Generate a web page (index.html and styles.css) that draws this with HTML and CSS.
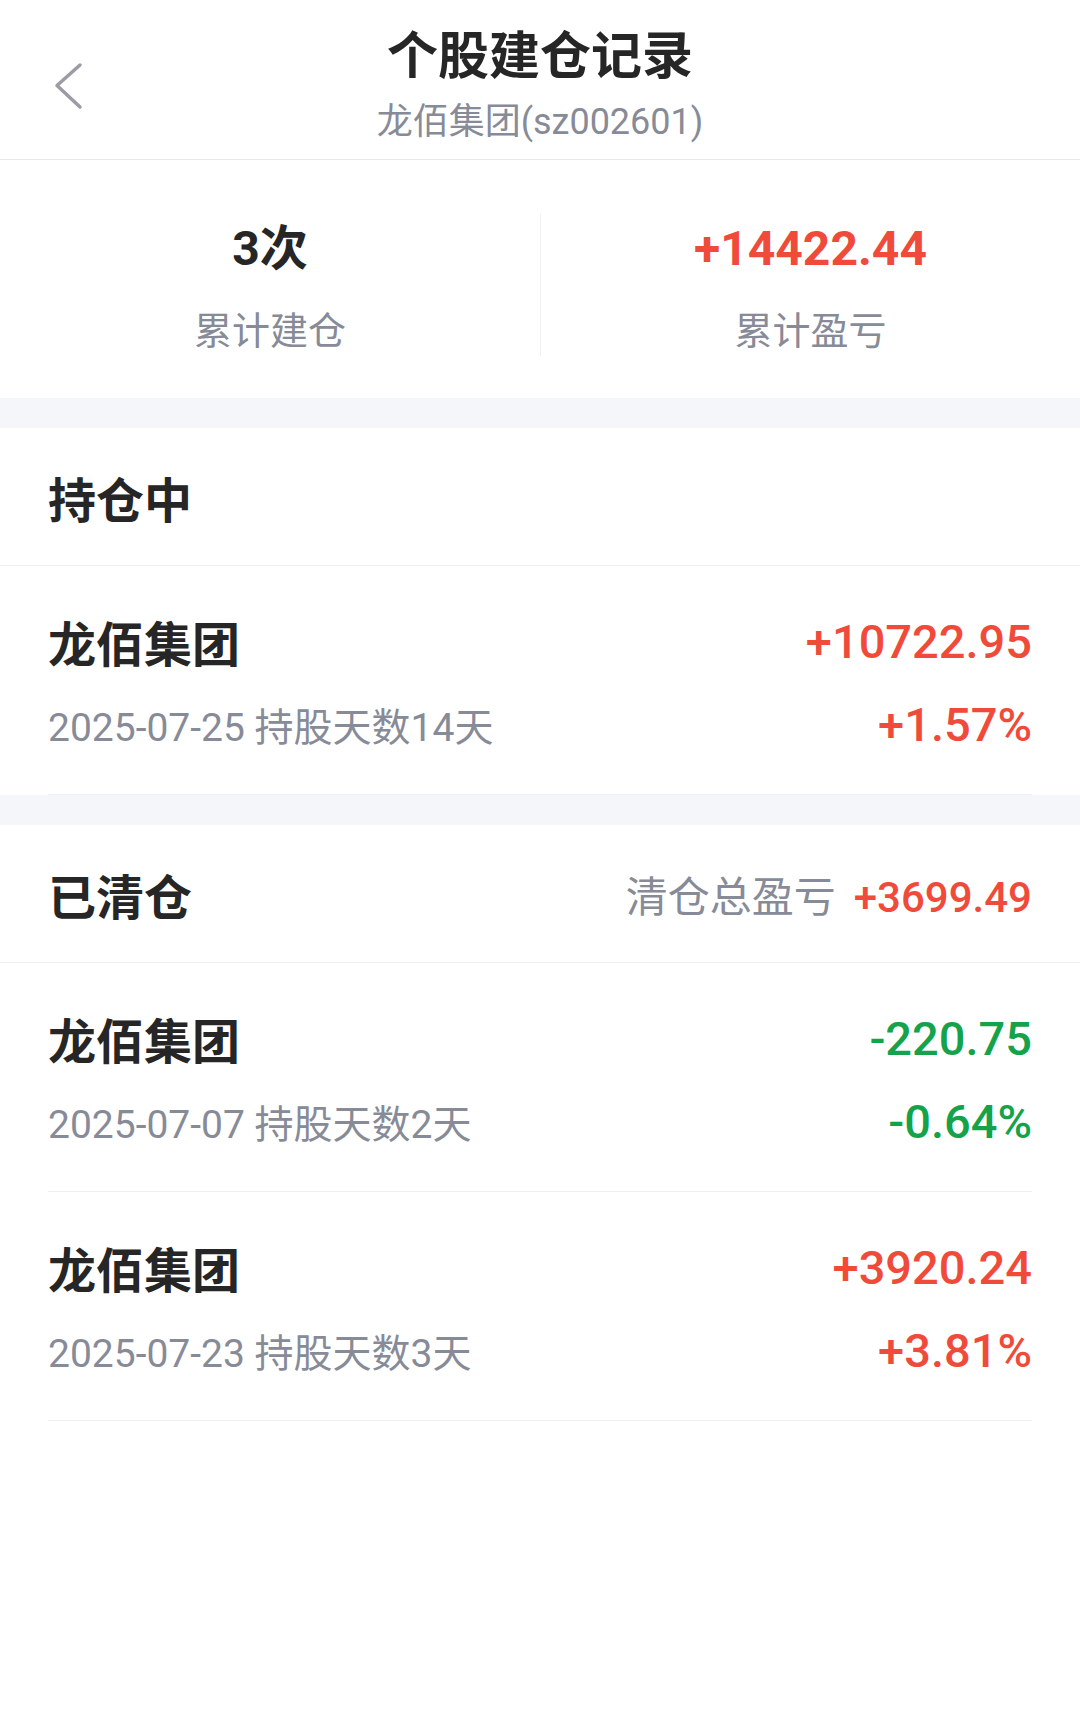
FILE: index.html
```html
<!DOCTYPE html>
<html lang="zh-CN">
<head>
    <meta charset="UTF-8">
    <meta name="viewport" content="width=device-width, initial-scale=1.0">
    <title>个股建仓记录</title>
    <link rel="stylesheet" href="styles.css">
</head>
<body>

    <header class="topbar">
        <a class="back" href="#">
            <svg width="36" height="48" viewBox="0 0 36 48">
                <path d="M30 3 L7 23.5 L30 45" fill="none" stroke="#9b9ca6" stroke-width="3.5" stroke-linecap="round" stroke-linejoin="round"/>
            </svg>
        </a>
        <div class="title-wrap">
            <h1 class="title">个股建仓记录</h1>
            <div class="subtitle">龙佰集团(sz002601)</div>
        </div>
        <div></div>
    </header>

    <section class="stats">
        <div class="stat">
            <div class="stat-value">3次</div>
            <div class="stat-label">累计建仓</div>
        </div>
        <div class="stat">
            <div class="stat-value up">+14422.44</div>
            <div class="stat-label">累计盈亏</div>
        </div>
    </section>

    <section class="group">
        <div class="group-head">
            <span class="group-title">持仓中</span>
        </div>
        <div class="record">
            <div class="row">
                <span class="name">龙佰集团</span>
                <span class="amount up">+10722.95</span>
            </div>
            <div class="row">
                <span class="meta">2025-07-25 持股天数14天</span>
                <span class="amount up">+1.57%</span>
            </div>
        </div>
    </section>

    <section class="group">
        <div class="group-head">
            <span class="group-title">已清仓</span>
            <span class="group-total">清仓总盈亏<b class="up">+3699.49</b></span>
        </div>
        <div class="record">
            <div class="row">
                <span class="name">龙佰集团</span>
                <span class="amount down">-220.75</span>
            </div>
            <div class="row">
                <span class="meta">2025-07-07 持股天数2天</span>
                <span class="amount down">-0.64%</span>
            </div>
        </div>
        <div class="record">
            <div class="row">
                <span class="name">龙佰集团</span>
                <span class="amount up">+3920.24</span>
            </div>
            <div class="row">
                <span class="meta">2025-07-23 持股天数3天</span>
                <span class="amount up">+3.81%</span>
            </div>
        </div>
    </section>

</body>
</html>
```

FILE: styles.css
```css
body {
    font-family: Roboto, "Noto Sans CJK SC", sans-serif;
    margin: 0;
    padding: 0;
    background: #fff;
    color: #262626;
}
.up {
    color: #f04b3a;
}
.down {
    color: #14a34a;
}
.topbar {
    display: grid;
    grid-template-columns: 140px 1fr 140px;
    align-items: start;
    height: 159px;
    border-bottom: 1px solid #e8e8ea;
}
.back {
    display: block;
    margin: 62px 0 0 50px;
    width: 36px;
    height: 48px;
}
.back svg {
    display: block;
}
.title-wrap {
    text-align: center;
    padding-top: 27px;
}
.title {
    margin: 0;
    font-size: 51px;
    line-height: 60px;
    font-weight: 700;
    color: #262626;
}
.subtitle {
    margin-top: 13px;
    font-size: 36px;
    line-height: 44px;
    color: #878b97;
}
.stats {
    display: grid;
    grid-template-columns: 1fr 1fr;
    padding: 53px 0 42px;
    border-bottom: 30px solid #f5f6fa;
}
.stat {
    text-align: center;
    padding-top: 6px;
}
.stat + .stat {
    border-left: 1px solid #f0f1f4;
}
.stat-value {
    font-size: 48px;
    line-height: 60px;
    font-weight: 700;
}
.stat-label {
    margin-top: 27px;
    font-size: 38px;
    line-height: 50px;
    color: #878b97;
}
.group + .group {
    border-top: 30px solid #f5f6fa;
}
.group-head {
    display: flex;
    justify-content: space-between;
    align-items: center;
    height: 137px;
    padding: 0 48px;
    border-bottom: 1px solid #eff0f3;
}
.group-title {
    font-size: 48px;
    font-weight: 700;
}
.group-total {
    font-size: 42px;
    color: #878b97;
}
.group-total b {
    margin-left: 18px;
    font-size: 42px;
    font-weight: 500;
}
.record {
    margin: 0 48px;
    padding: 45px 0 40px;
    border-bottom: 1px solid #eff0f3;
}
.row {
    display: flex;
    justify-content: space-between;
    align-items: center;
    height: 60px;
}
.row + .row {
    margin-top: 23px;
}
.name {
    font-size: 48px;
    font-weight: 700;
}
.meta {
    font-size: 39px;
    color: #878b97;
}
.amount {
    font-size: 47px;
    font-weight: 500;
}
```
